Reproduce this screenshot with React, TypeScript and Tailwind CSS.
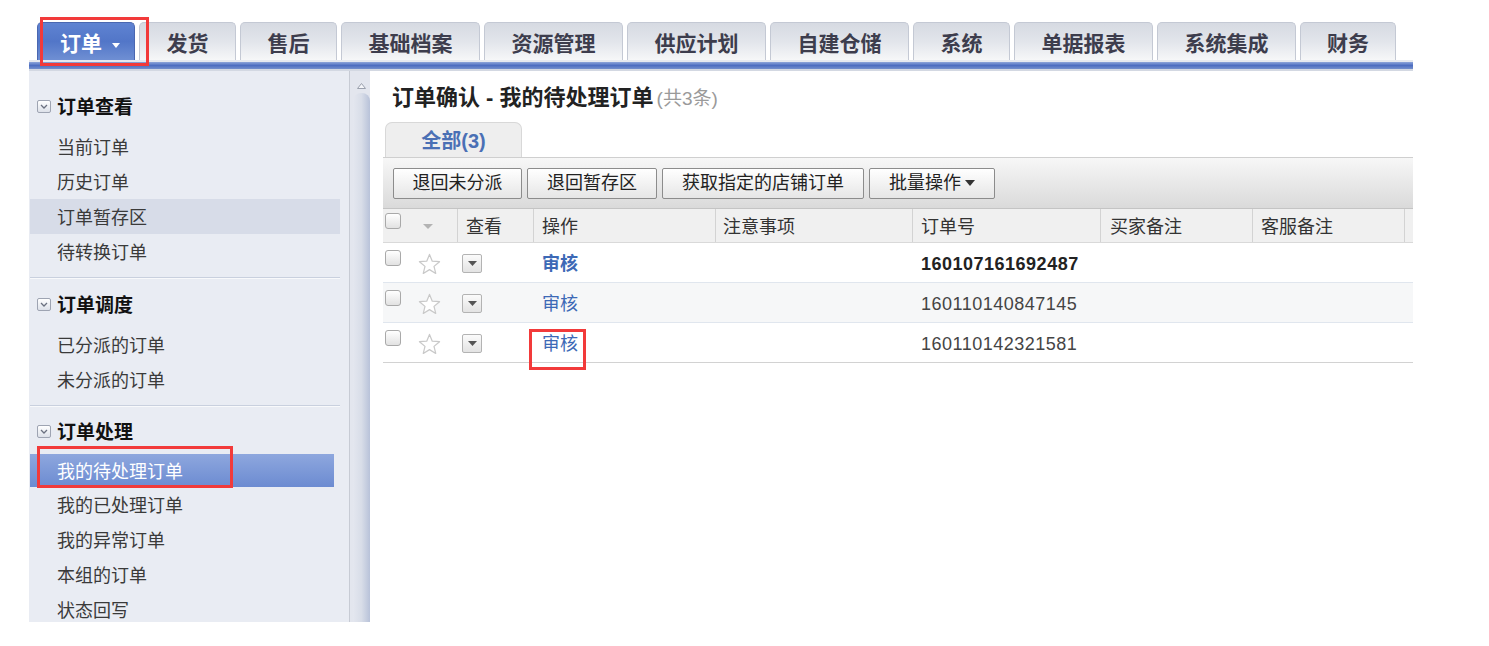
import React from 'react';

const FONT = "font-['Liberation_Sans','Noto_Sans_CJK_SC',sans-serif]";

const tabs = [
  { t: '订单', w: 'w-[98px]', active: true },
  { t: '发货', w: 'w-[97px]' },
  { t: '售后', w: 'w-[97px]' },
  { t: '基础档案', w: 'w-[139px]' },
  { t: '资源管理', w: 'w-[139px]' },
  { t: '供应计划', w: 'w-[139px]' },
  { t: '自建仓储', w: 'w-[139px]' },
  { t: '系统', w: 'w-[97px]' },
  { t: '单据报表', w: 'w-[139px]' },
  { t: '系统集成', w: 'w-[139px]' },
  { t: '财务', w: 'w-[96px]' },
];

function CollapseIcon() {
  return (
    <span className="w-[14px] h-[13px] mr-[6px] rounded-[2px] border border-[#9ea4b2] bg-gradient-to-b from-white to-[#dde1e9] flex items-center justify-center">
      <svg width="8" height="5" viewBox="0 0 8 5">
        <path d="M1 1 L4 4 L7 1" fill="none" stroke="#6b7180" strokeWidth="1.3" />
      </svg>
    </span>
  );
}

function SideHeader({ title }: { title: string }) {
  return (
    <div className="flex items-center h-[35px] pl-[7px] text-[19px] font-bold text-[#111]">
      <span className="mt-[2px]">
        <CollapseIcon />
      </span>
      <span className="leading-[35px] pt-[4px]">{title}</span>
    </div>
  );
}

function SideItem({ label, hl, sel }: { label: string; hl?: boolean; sel?: boolean }) {
  if (sel) {
    return (
      <div className="mr-[6px] h-[33px] pt-[4px] leading-[29px] pl-[27px] text-[18px] text-white bg-gradient-to-b from-[#8ea7de] to-[#6c8bd1]">
        {label}
      </div>
    );
  }
  return (
    <div className={`h-[35px] pt-[4px] leading-[31px] pl-[27px] text-[18px] text-[#3a3a3a] ${hl ? 'bg-[#d7dce8]' : ''}`}>
      {label}
    </div>
  );
}

function Sep() {
  return <div className="h-[2px] border-t border-[#c9d0de] bg-[#f8f9fb]" />;
}

function Checkbox({ cls }: { cls?: string }) {
  return (
    <span
      className={`block w-[16px] h-[16px] rounded-[3px] border border-[#a9a9a9] bg-gradient-to-b from-white to-[#e2e2e2] ${cls ?? ''}`}
    />
  );
}

function Star() {
  return (
    <svg width="23" height="22" viewBox="0 0 24 23">
      <polygon
        points="12,1.5 14.9,8.6 22.5,9.1 16.7,14 18.5,21.4 12,17.4 5.5,21.4 7.3,14 1.5,9.1 9.1,8.6"
        fill="#ffffff"
        stroke="#c9c9c9"
        strokeWidth="1.3"
        strokeLinejoin="round"
      />
    </svg>
  );
}

function DropBox() {
  return (
    <span className="w-[20px] h-[19px] rounded-[2px] border border-[#b3b3b3] bg-gradient-to-b from-[#fbfbfb] to-[#e3e3e3] flex items-center justify-center">
      <svg width="9" height="5" viewBox="0 0 9 5">
        <polygon points="0,0 9,0 4.5,5" fill="#555" />
      </svg>
    </span>
  );
}

function Btn({ w, children }: { w: string; children: React.ReactNode }) {
  return (
    <div
      className={`${w} h-[31px] rounded-[2px] border border-[#8c8c8c] bg-gradient-to-b from-white to-[#e6e6e6] flex items-center justify-center text-[18px] text-[#222] leading-none`}
    >
      {children}
    </div>
  );
}

const rows = [
  { no: '160107161692487', bold: true, bg: 'bg-white' },
  { no: '160110140847145', bold: false, bg: 'bg-[#f6f7f8]' },
  { no: '160110142321581', bold: false, bg: 'bg-white' },
];

export default function App() {
  return (
    <div className={`relative w-[1489px] h-[646px] bg-white pt-[22px] pl-[29px] overflow-hidden ${FONT}`}>
      <div className="w-[1384px]">
        {/* top tabs */}
        <div className="flex items-end gap-[4px] pl-[8px] h-[38px]">
          {tabs.map((t) =>
            t.active ? (
              <div
                key={t.t}
                className={`${t.w} h-[38px] rounded-t-[5px] border border-b-0 border-[#4a67b0] bg-gradient-to-b from-[#5f83d2] via-[#5276c8] to-[#6f8fd3] flex items-center justify-center pt-[5px] pl-[8px] text-[21px] font-bold text-white`}
              >
                <span>{t.t}</span>
                <svg className="ml-[10px] mt-[2px]" width="8" height="5" viewBox="0 0 8 5">
                  <polygon points="0,0 8,0 4,5" fill="#ffffff" />
                </svg>
              </div>
            ) : (
              <div
                key={t.t}
                className={`${t.w} h-[38px] rounded-t-[5px] border border-b-0 border-[#c4c9d4] bg-gradient-to-b from-[#d6dae2] via-[#e2e5eb] to-[#f6f7f8] flex items-center justify-center pt-[5px] text-[21px] font-bold text-[#3d3d4d]`}
              >
                {t.t}
              </div>
            )
          )}
        </div>
        <div className="h-[2px] bg-[#e6e9ef]" />
        <div className="h-[7px] bg-gradient-to-b from-[#8ea5d9] via-[#4d6dc0] to-[#7590cd]" />
        <div className="h-[2px] bg-[#d3d8e2]" />

        {/* body */}
        <div className="flex h-[551px]">
          {/* sidebar */}
          <div className="w-[320px] bg-[#e9ecf3] pl-[1px] pr-[9px] pt-[17px]">
            <SideHeader title="订单查看" />
            <div className="mt-[6px] pb-[8px]">
              <SideItem label="当前订单" />
              <SideItem label="历史订单" />
              <SideItem label="订单暂存区" hl />
              <SideItem label="待转换订单" />
            </div>
            <Sep />
            <div className="pt-[7px]">
              <SideHeader title="订单调度" />
              <div className="mt-[6px] pb-[8px]">
                <SideItem label="已分派的订单" />
                <SideItem label="未分派的订单" />
              </div>
            </div>
            <Sep />
            <div className="pt-[6px]">
              <SideHeader title="订单处理" />
              <div className="mt-[6px]">
                <SideItem label="我的待处理订单" sel />
                <SideItem label="我的已处理订单" />
                <SideItem label="我的异常订单" />
                <SideItem label="本组的订单" />
                <SideItem label="状态回写" />
              </div>
            </div>
          </div>

          {/* scroll column */}
          <div className="w-[21px] border-l border-[#c7cbd4] bg-[#e3e6ee] flex flex-col">
            <div className="h-[22px] flex items-end justify-center pb-[4px] pl-[2px]">
              <svg width="9" height="6" viewBox="0 0 9 6">
                <polygon points="4.5,0.5 8.5,5.5 0.5,5.5" fill="#f4f5f8" stroke="#9aa0ad" strokeWidth="1" />
              </svg>
            </div>
            <div className="flex-1 ml-[3px] rounded-t-[8px] bg-gradient-to-r from-[#e4e7ef] via-[#d8dde8] to-[#b8c2d9]" />
          </div>

          {/* main */}
          <div className="flex-1 bg-white pl-[13px]">
            <div className="mt-[11px] h-[30px] pl-[9px] flex items-center">
              <span className="text-[22px] font-bold text-[#222] leading-[30px] pt-[2px]">订单确认 - 我的待处理订单</span>
              <span className="ml-[3px] mt-[4px] text-[19px] text-[#9a9a9a] leading-[30px]">(共3条)</span>
            </div>
            <div className="mt-[10px] pl-[2px] flex">
              <div className="w-[137px] h-[35px] rounded-t-[7px] border border-b-0 border-[#d8d8d8] bg-[#eeeeee] flex items-center justify-center pt-[2px] text-[20px] font-bold text-[#4a70b5]">
                全部(3)
              </div>
            </div>
            <div className="h-[51px] border-t border-[#cfcfcf] bg-gradient-to-b from-[#f7f7f7] to-[#dadada] flex items-center pl-[10px] gap-[5px]">
              <Btn w="w-[129px]">退回未分派</Btn>
              <Btn w="w-[130px]">退回暂存区</Btn>
              <Btn w="w-[202px]">获取指定的店铺订单</Btn>
              <Btn w="w-[126px]">
                <span>批量操作</span>
                <svg className="ml-[4px]" width="10" height="6" viewBox="0 0 10 6">
                  <polygon points="0,0 10,0 5,6" fill="#333" />
                </svg>
              </Btn>
            </div>

            {/* header row */}
            <div className="h-[35px] flex border-t border-[#c4c4c4] border-b border-b-[#d9d9d9] bg-[#f0f0f0] text-[18px] text-[#333]">
              <div className="w-[75px] flex border-r border-[#d3d3d3]">
                <Checkbox cls="ml-[2px] mt-[4px]" />
                <svg className="ml-[22px] self-center mt-[2px]" width="10" height="5" viewBox="0 0 10 5">
                  <polygon points="0,0 10,0 5,5" fill="#b3b3b3" />
                </svg>
              </div>
              <div className="w-[76px] pl-[8px] pt-[4px] flex items-center border-r border-[#d3d3d3]">查看</div>
              <div className="w-[182px] pl-[8px] pt-[4px] flex items-center border-r border-[#d3d3d3]">操作</div>
              <div className="w-[197px] pl-[7px] pt-[4px] flex items-center border-r border-[#d3d3d3]">注意事项</div>
              <div className="w-[188px] pl-[8px] pt-[4px] flex items-center border-r border-[#d3d3d3]">订单号</div>
              <div className="w-[152px] pl-[9px] pt-[4px] flex items-center border-r border-[#d3d3d3]">买家备注</div>
              <div className="w-[152px] pl-[8px] pt-[4px] flex items-center border-r border-[#d3d3d3]">客服备注</div>
              <div className="flex-1" />
            </div>

            {rows.map((r, i) => (
              <div
                key={r.no}
                className={`h-[40px] flex ${r.bg} border-b ${i === rows.length - 1 ? 'border-[#d2d2d2]' : 'border-[#e0e6ee]'}`}
              >
                <div className="w-[75px] flex">
                  <Checkbox cls="ml-[2px] mt-[7px]" />
                  <span className="ml-[17px] self-center mt-[2px]">
                    <Star />
                  </span>
                </div>
                <div className="w-[76px] pl-[4px] flex items-center mt-[2px]">
                  <DropBox />
                </div>
                <div
                  className={`w-[182px] pl-[8px] pt-[4px] flex items-center text-[18px] text-[#3d69b6] ${r.bold ? 'font-bold' : ''}`}
                >
                  审核
                </div>
                <div className="w-[197px]" />
                <div
                  className={`w-[188px] pl-[8px] pt-[4px] flex items-center text-[18px] tracking-[0.5px] ${r.bold ? 'font-bold text-[#222]' : 'text-[#444]'}`}
                >
                  {r.no}
                </div>
                <div className="w-[152px]" />
                <div className="w-[152px]" />
                <div className="flex-1" />
              </div>
            ))}
          </div>
        </div>
      </div>

      {/* red annotation boxes */}
      <div className="absolute left-[40px] top-[17px] w-[109px] h-[49px] border-[3px] border-[#f23a3a]" />
      <div className="absolute left-[37px] top-[446px] w-[196px] h-[42px] border-[3px] border-[#f23a3a]" />
      <div className="absolute left-[529px] top-[329px] w-[57px] h-[41px] border-[3px] border-[#f23a3a]" />
    </div>
  );
}
